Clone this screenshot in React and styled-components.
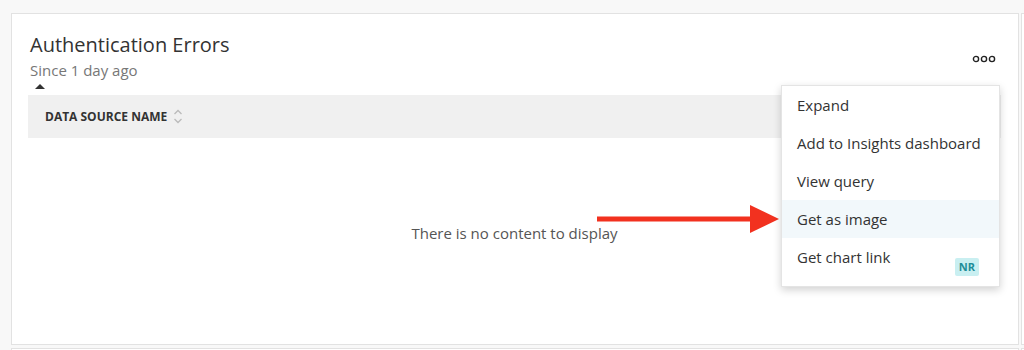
import React from 'react';
import styled, { createGlobalStyle } from 'styled-components';

const GlobalStyle = createGlobalStyle`
  html, body {
    margin: 0;
    padding: 0;
    background: #f8f8f8;
    font-family: "Open Sans", "Liberation Sans", sans-serif;
    overflow: hidden;
  }
`;

const Page = styled.div`
  width: 1024px;
  height: 350px;
  overflow: hidden;
  padding: 13px 0 0 11px;
  box-sizing: border-box;
  display: grid;
  grid-template-columns: 1008px 1008px;
  grid-auto-rows: 332px;
  column-gap: 2px;
  row-gap: 3px;
`;

const Card = styled.div`
  position: relative;
  background: #fff;
  border: 1px solid #e2e2e2;
  box-sizing: border-box;
  padding: 17px 17px 0 16px;
  display: flex;
  flex-direction: column;
`;

const HeaderRow = styled.div`
  display: flex;
  justify-content: space-between;
  align-items: flex-start;
  padding-left: 2px;
`;

const Titles = styled.div`
  display: flex;
  flex-direction: column;
  gap: 2px;
`;

const Title = styled.h2`
  margin: 0;
  font-size: 20px;
  font-weight: 400;
  color: #333;
  line-height: 27px;
`;

const Subtitle = styled.span`
  font-size: 15px;
  color: #777;
  line-height: 20px;
`;

const MoreButton = styled.button`
  border: 0;
  background: none;
  padding: 0;
  margin: 24px 5px 0 0;
  display: flex;
  cursor: pointer;
`;

const Caret = styled.div`
  width: 0;
  height: 0;
  margin: 4px 0 6px 7px;
  border-left: 5px solid transparent;
  border-right: 5px solid transparent;
  border-bottom: 5px solid #333;
`;

const TableHead = styled.div`
  height: 43px;
  background: #f0f0f0;
  display: flex;
  align-items: center;
  padding-left: 17px;
  gap: 6px;
`;

const ColumnLabel = styled.span`
  font-size: 12px;
  font-weight: 700;
  color: #333;
`;

const Empty = styled.div`
  flex: 1;
  display: flex;
  justify-content: center;
  padding-top: 85px;
  font-size: 15px;
  color: #555;
`;

const Menu = styled.ul`
  position: absolute;
  top: 71px;
  left: 769px;
  width: 219px;
  margin: 0;
  padding: 0 0 10px;
  list-style: none;
  background: #fff;
  border: 1px solid #e4e4e4;
  box-shadow: 0 3px 8px rgba(0, 0, 0, 0.18);
  box-sizing: border-box;
`;

const MenuItem = styled.li`
  position: relative;
  height: 38px;
  display: flex;
  align-items: center;
  padding-left: 15px;
  font-size: 15px;
  color: #333;
  background: ${({ active }) => (active ? '#f2f8fb' : 'transparent')};
`;

const Badge = styled.span`
  position: absolute;
  right: 20px;
  bottom: 0;
  padding: 0 4px;
  height: 18px;
  line-height: 18px;
  font-size: 11px;
  font-weight: 700;
  color: #1f8e98;
  background: #c9eff1;
  border-radius: 2px;
`;

const Arrow = styled.svg`
  position: absolute;
  left: 585px;
  top: 191px;
`;

const SortIcon = () => (
  <svg width="10" height="15" viewBox="0 0 10 15" fill="none" stroke="#bbb" strokeWidth="1.3">
    <path d="M1.5 5 L5 1.5 L8.5 5" />
    <path d="M1.5 10 L5 13.5 L8.5 10" />
  </svg>
);

const Dots = () => (
  <svg width="24" height="8" viewBox="0 0 24 8" fill="none" stroke="#222" strokeWidth="1.4">
    <circle cx="4" cy="4" r="2.6" />
    <circle cx="12" cy="4" r="2.6" />
    <circle cx="20" cy="4" r="2.6" />
  </svg>
);

const menuItems = ['Expand', 'Add to Insights dashboard', 'View query', 'Get as image', 'Get chart link'];

export default function App() {
  return (
    <>
      <GlobalStyle />
      <Page>
        <Card>
          <HeaderRow>
            <Titles>
              <Title>Authentication Errors</Title>
              <Subtitle>Since 1 day ago</Subtitle>
            </Titles>
            <MoreButton>
              <Dots />
            </MoreButton>
          </HeaderRow>
          <Caret />
          <TableHead>
            <ColumnLabel>DATA SOURCE NAME</ColumnLabel>
            <SortIcon />
          </TableHead>
          <Empty>There is no content to display</Empty>

          <Arrow width="190" height="30" viewBox="0 0 190 30">
            <line x1="0" y1="14" x2="158" y2="14" stroke="#f2311f" strokeWidth="5" />
            <polygon points="153,0 182,14 153,28" fill="#f2311f" />
          </Arrow>

          <Menu>
            {menuItems.map((item) => (
              <MenuItem key={item} active={item === 'Get as image'}>
                {item}
                {item === 'Get chart link' && <Badge>NR</Badge>}
              </MenuItem>
            ))}
          </Menu>
        </Card>
        <Card />
        <Card />
        <Card />
      </Page>
    </>
  );
}
